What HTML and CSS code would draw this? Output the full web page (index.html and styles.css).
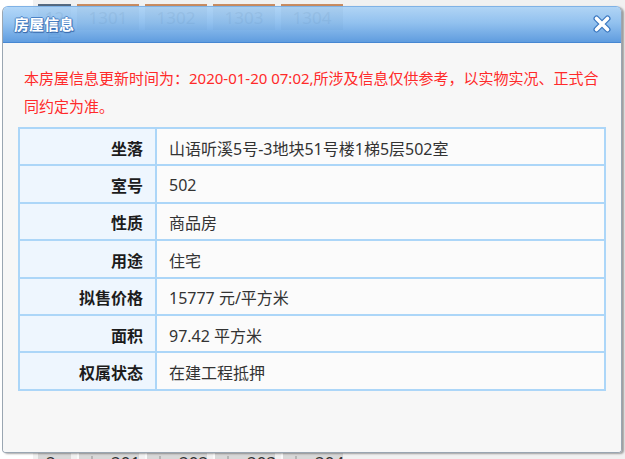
FILE: index.html
```html
<!DOCTYPE html>
<html lang="zh-CN">
<head>
<meta charset="utf-8">
<title>房屋信息</title>
<link rel="stylesheet" href="styles.css">
</head>
<body>
<div class="page">
  <div class="tabs tabs-top">
    <div class="tab tab-floor">12层</div>
    <div class="tab tab-room">1301</div>
    <div class="tab tab-room">1302</div>
    <div class="tab tab-room">1303</div>
    <div class="tab tab-room">1304</div>
  </div>
  <div class="tabs tabs-bottom">
    <div class="btab btab-floor">2层</div>
    <div class="btab"><span class="chk"></span>201</div>
    <div class="btab"><span class="chk"></span>202</div>
    <div class="btab"><span class="chk"></span>203</div>
    <div class="btab"><span class="chk"></span>204</div>
  </div>
</div>

<div class="dialog">
  <div class="dialog-header">
    <span class="dialog-title">房屋信息</span>
    <span class="dialog-close" aria-label="关闭">
      <svg width="20" height="20" viewBox="0 0 20 20">
        <path d="M4.5 4.5 L15.5 15.5 M15.5 4.5 L4.5 15.5" stroke="#3b78c0" stroke-width="6" stroke-linecap="round" fill="none"/>
        <path d="M4.5 4.5 L15.5 15.5 M15.5 4.5 L4.5 15.5" stroke="#ffffff" stroke-width="3.6" stroke-linecap="round" fill="none"/>
      </svg>
    </span>
  </div>
  <div class="dialog-body">
    <p class="notice">本房屋信息更新时间为：2020-01-20 07:02,所涉及信息仅供参考，以实物实况、正式合同约定为准。</p>
    <div class="info">
      <div class="label">坐落</div><div class="value">山语听溪5号-3地块51号楼1梯5层502室</div>
      <div class="label">室号</div><div class="value">502</div>
      <div class="label">性质</div><div class="value">商品房</div>
      <div class="label">用途</div><div class="value">住宅</div>
      <div class="label">拟售价格</div><div class="value">15777 元/平方米</div>
      <div class="label">面积</div><div class="value">97.42 平方米</div>
      <div class="label">权属状态</div><div class="value">在建工程抵押</div>
    </div>
  </div>
</div>
</body>
</html>
```

FILE: styles.css
```css
* { box-sizing: border-box; }
html, body { margin: 0; padding: 0; }
body {
  width: 625px;
  height: 459px;
  overflow: hidden;
  background: #ffffff;
  font-family: "Noto Sans", "Noto Sans CJK SC", sans-serif;
  position: relative;
}

/* background page */
.page {
  height: 459px;
  display: flex;
  flex-direction: column;
  justify-content: space-between;
  background: linear-gradient(to right, #ffffff 0, #ffffff 33px, #f1f1f1 33px);
}
.tabs {
  display: flex;
  gap: 6px;
  padding-left: 38px;
}
.tabs-top { padding-top: 4px; }
.tab {
  height: 26px;
  width: 62px;
  background: #d2d2d2;
  border-top: 2px solid #c88c62;
  color: #a0a0a0;
  font-size: 17px;
  line-height: 24px;
  text-align: center;
}
.tab-floor {
  width: 33px;
  border-top-color: #566a80;
  background: #e0e0e0;
  color: #a8a8a8;
}
.tabs-bottom { height: 8px; overflow: hidden; }
.btab {
  width: 62px;
  height: 24px;
  background: #d8d8d8;
  color: #333;
  font-size: 17px;
  line-height: 22px;
  display: flex;
  align-items: flex-start;
  gap: 18px;
  padding: 1px 0 0 12px;
  border-left: 2px solid #fafafa;
}
.btab-floor { width: 33px; padding-left: 8px; border-left: 0; }
.chk {
  width: 11px;
  height: 11px;
  margin-top: 4px;
  border: 1px solid #b5b5b5;
  background: #f3f3f3;
}

/* dialog */
.dialog {
  position: absolute;
  left: 2px;
  top: 6px;
  width: 620px;
  height: 447px;
  display: flex;
  flex-direction: column;
  border: 1px solid #9aa6b2;
  border-top-color: #7fb2e6;
  border-radius: 6px 6px 4px 4px;
  background: transparent;
  box-shadow: 2px 1px 2px rgba(0, 0, 0, 0.35);
  overflow: hidden;
}
.dialog-header {
  height: 36px;
  flex: none;
  display: flex;
  align-items: center;
  justify-content: space-between;
  padding: 0 9px 2px 11px;
  background: linear-gradient(to bottom, rgba(160, 205, 246, 0.8) 0%, rgba(128, 184, 238, 0.84) 45%, rgba(88, 152, 222, 0.95) 100%);
  border-bottom: 1px solid #4687d2;
}
.dialog-title {
  color: #ffffff;
  font-weight: bold;
  font-size: 15px;
  text-shadow: -1px 0 0 #4a82c6, 1px 0 0 #4a82c6, 0 -1px 0 #4a82c6, 0 1px 0 #3a6fb5, 1px 1px 1px #2f5f9f;
}
.dialog-close {
  display: flex;
  width: 20px;
  height: 20px;
}

.dialog-body {
  flex: 1;
  background: #f7f7f7;
  padding: 21px 15px 0 15px;
}
.notice {
  margin: 0 0 7px 0;
  padding: 0 4px 0 6px;
  color: #ff2a2a;
  font-size: 15px;
  line-height: 28px;
}

.info {
  display: grid;
  grid-template-columns: 137px 1fr;
  grid-auto-rows: 37.4px;
  border-top: 2px solid #acd6f8;
  border-left: 2px solid #acd6f8;
}
.label, .value {
  display: flex;
  align-items: center;
  border-right: 2px solid #acd6f8;
  border-bottom: 2px solid #acd6f8;
  font-size: 16px;
  padding-top: 2px;
}
.label {
  justify-content: flex-end;
  padding-right: 12px;
  background: #eef6fe;
  color: #1c1c1c;
  font-weight: bold;
}
.value {
  padding-left: 12px;
  background: #fbfbfb;
  color: #333333;
}
```
